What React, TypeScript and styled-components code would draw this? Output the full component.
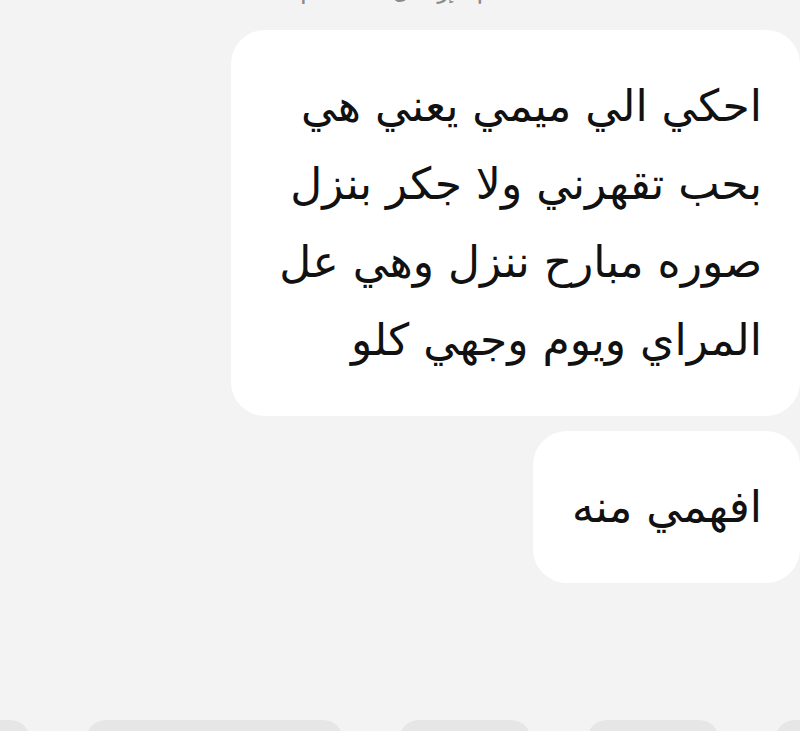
import React from 'react'
import styled, { createGlobalStyle } from 'styled-components'

const GlobalStyle = createGlobalStyle`
  html, body {
    margin: 0;
    padding: 0;
    background: #f3f3f3;
    overflow: hidden;
  }
  #root {
    width: 800px;
    height: 731px;
  }
`

interface Message {
  id: number
  text: string
}

const messages: Message[] = [
  { id: 1, text: 'احكي الي ميمي يعني هي بحب تقهرني ولا جكر بنزل صوره مبارح ننزل وهي عل المراي ويوم وجهي كلو' },
  { id: 2, text: 'افهمي منه' },
]

const chips = [
  { id: 1, width: 110, offset: -80 },
  { id: 2, width: 257, offset: 0 },
  { id: 3, width: 132, offset: 0 },
  { id: 4, width: 132, offset: 0 },
  { id: 5, width: 120, offset: 0 },
]

const App = () => {
  return (
    <>
      <GlobalStyle />
      <Screen>
        <Stamp dir="rtl">تم الإرسال · ٥:٣٢ م</Stamp>
        <MessageList>
          {messages.map((m) => (
            <Bubble key={m.id} dir="rtl">
              {m.text}
            </Bubble>
          ))}
        </MessageList>
        <ChipRow>
          {chips.map((c) => (
            <Chip key={c.id} $width={c.width} $offset={c.offset} />
          ))}
        </ChipRow>
      </Screen>
    </>
  )
}

export default App

const Screen = styled.div`
  display: flex;
  flex-direction: column;
  width: 800px;
  height: 731px;
  overflow: hidden;
  background: #f3f3f3;
  font-family: 'DejaVu Sans', sans-serif;
`

const Stamp = styled.div`
  margin-top: -25px;
  height: 30px;
  text-align: center;
  color: #8a8a8a;
  font-size: 24px;
  line-height: 30px;
`

const MessageList = styled.div`
  display: flex;
  flex-direction: column;
  align-items: flex-end;
  gap: 15px;
  flex: 1 0 0;
  padding-top: 25px;
`

const Bubble = styled.div`
  box-sizing: border-box;
  max-width: 569px;
  padding: 37px 38px 37px 39px;
  border-radius: 34px;
  background: #ffffff;
  color: #111111;
  font-size: 44px;
  line-height: 78px;
  text-align: right;
`

const ChipRow = styled.div`
  display: flex;
  gap: 56px;
  height: 11px;
`

const Chip = styled.div<{ $width: number; $offset: number }>`
  flex-shrink: 0;
  width: ${(p) => p.$width}px;
  margin-left: ${(p) => p.$offset}px;
  height: 40px;
  border-radius: 30px;
  background: #e6e6e6;
`
